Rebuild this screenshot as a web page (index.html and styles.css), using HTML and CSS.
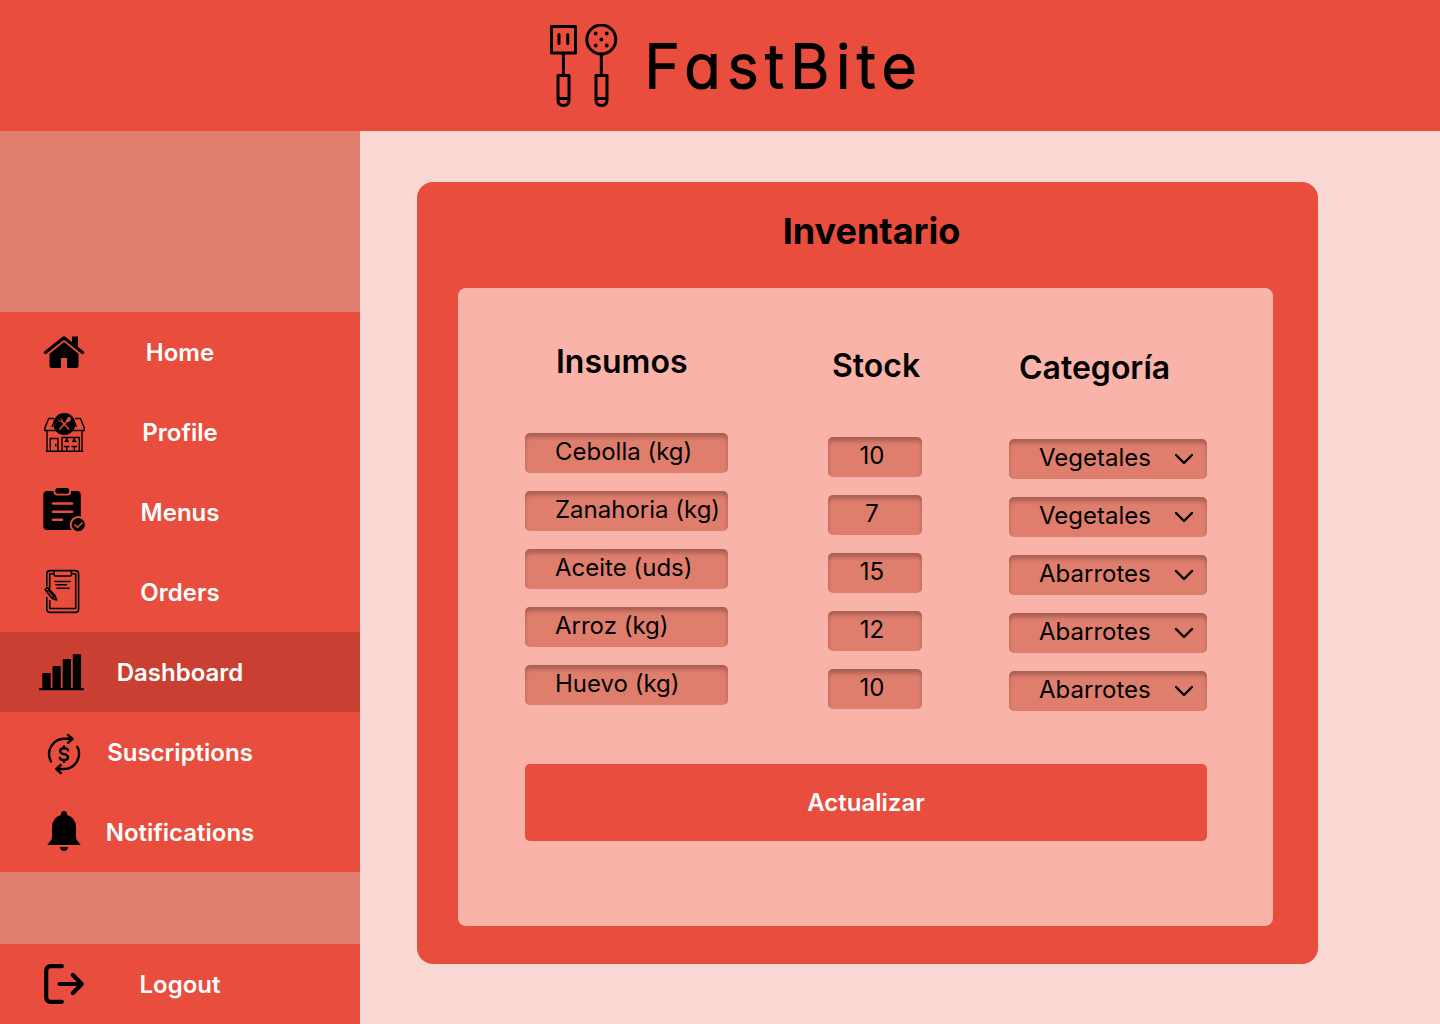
FILE: index.html
```html
<!DOCTYPE html>
<html lang="es">
<head>
<meta charset="utf-8">
<meta name="viewport" content="width=device-width, initial-scale=1">
<title>FastBite - Inventario</title>
<link rel="stylesheet" href="styles.css">
</head>
<body>
<header class="topbar">
  <svg class="topbar-logo" viewBox="0 0 72 84" aria-hidden="true" fill="none" stroke="currentColor" stroke-width="3" stroke-linejoin="round" stroke-linecap="round">
    <path d="M3.5 2.5h24v26.500h-24zM11 10.500v9M19.700 10.500v9M15.400 29v22"/>
    <path d="M10 51.500h11V76q0 5.500-5.500 5.500T10 76zM10 74.500h11"/>
    <circle cx="53.300" cy="15.500" r="14.500"/>
    <path d="M53.300 30v21M48 51.500h11V76q0 5.500-5.500 5.500T48 76zM48 74.500h11"/>
    <g fill="currentColor" stroke="none"><circle cx="47.700" cy="9.500" r="1.900"/><circle cx="58.700" cy="9.500" r="1.900"/><circle cx="53.300" cy="15.500" r="1.900"/><circle cx="47.700" cy="21.500" r="1.900"/><circle cx="58.700" cy="21.500" r="1.900"/></g>
  </svg>
  <span class="topbar-name">FastBite</span>
</header>
<div class="layout">
  <aside class="sidebar">
    <nav class="menu">
      <a class="menu-item" href="#home">
        <svg class="icon" viewBox="0 0 48 48" aria-hidden="true"><path d="M5.500 24.500 24 9.800l18.500 14.700" fill="none" stroke="currentColor" stroke-width="3.200" stroke-linecap="round" stroke-linejoin="round"/><path d="M32 8.500h6V20l-6-5zM24 14l14.500 11.800V38q0 2-2 2H27V30h-6v10h-9.500q-2 0-2-2V25.800z" fill="currentColor"/></svg>
        <span>Home</span>
      </a>
      <a class="menu-item" href="#profile">
        <svg class="icon" viewBox="0 0 48 48" aria-hidden="true" fill="none" stroke="currentColor" stroke-width="1.400"><path d="M14 10.500H8.700L4.800 20v2.500h39.500V20l-3.900-9.500H35M7 22.500v20.800h35v-20.800M5.800 43.300h37.500M10.300 43V30.500h7.700V43M22 43V29.500h17.300V43M12 19l2.500-6M36.500 19 34 13"/><path d="M26.700 29.500V32M34.300 29.500V32M23.800 38.500h5.700M31.500 38.500h5.700M26.700 38.500V43M34.300 38.500V43M15.800 36v2.500"/><path d="M24.500 33.800 26 31.500h1.400l1.500 2.300zM32.100 33.800l1.500-2.300H35l1.500 2.300z" fill="currentColor" stroke-width=".6"/><circle cx="24.300" cy="16" r="11" fill="currentColor" stroke="none"/><g class="icon-cut"><path d="m21 12.500 8 9M27.500 12.500l-8 9" stroke-width="1.500"/><path d="m18.300 11.500 2.200 2.500M20.500 10l2 2.500" stroke-width="1"/></g><ellipse class="icon-cut-fill" cx="28.500" cy="11.700" rx="1.900" ry="2.800" transform="rotate(40 28.500 11.700)" stroke="none"/></svg>
        <span>Profile</span>
      </a>
      <a class="menu-item" href="#menus">
        <svg class="icon" viewBox="0 0 48 48" aria-hidden="true"><rect x="3.300" y="3" width="37.500" height="39" rx="4" fill="currentColor"/><rect x="14.500" y="-1" width="15.500" height="7.500" rx="3" class="icon-cut" fill="currentColor" stroke-width="2"/><rect x="15.500" y=".8" width="13.500" height="4.700" rx="2" fill="currentColor"/><g class="icon-cut" fill="none" stroke-width="2.600" stroke-linecap="round"><path d="M13 15.500h19M13 23.700h19M13 31.700h9"/></g><circle cx="38.300" cy="36.700" r="7.600" class="icon-cut" fill="currentColor" stroke-width="2"/><path d="m34.500 36.500 3 3 5-5" class="icon-cut" fill="none" stroke-width="1.500"/></svg>
        <span>Menus</span>
      </a>
      <a class="menu-item" href="#orders">
        <svg class="icon" viewBox="0 0 48 48" aria-hidden="true" fill="none" stroke="currentColor" stroke-width="1.600" stroke-linecap="round" stroke-linejoin="round"><path d="M6.800 18V6q0-3.400 3.400-3.400h25q3.400 0 3.400 3.400v35q0 3.400-3.400 3.400h-25q-3.400 0-3.400-3.400V29.500"/><path d="M9.700 20V5.700h4.500M31.500 5.700h4.200v34.800h-26v-8"/><path d="M14 3v3.500q0 1.500 1.500 1.500H30q1.500 0 1.500-1.500V3M15 13.500h15M16 16.800h10.500M17 20.300h12"/><path d="m5 21.500 2.500-2 7.500 8 1.500 4.500-4.500-1.800zM7 23.500l2.500-2M12 30l3-2.500M8.500 22l5 6"/></svg>
        <span>Orders</span>
      </a>
      <a class="menu-item menu-item-active" href="#dashboard" aria-current="page">
        <svg class="icon" viewBox="0 0 48 48" aria-hidden="true" fill="currentColor"><rect x="2.300" y="25" width="8.400" height="16" rx="1"/><rect x="12.500" y="18" width="8.300" height="23" rx="1"/><rect x="22.700" y="11" width="8.300" height="30" rx="1"/><rect x="32.800" y="6.200" width="8.300" height="35" rx="1"/><rect x="-1" y="40" width="45" height="2.300" rx="1"/></svg>
        <span>Dashboard</span>
      </a>
      <a class="menu-item" href="#suscriptions">
        <svg class="icon" viewBox="0 0 48 48" aria-hidden="true" fill="none" stroke="currentColor" stroke-width="2.400" stroke-linecap="round" stroke-linejoin="round"><path d="M11 33.500A15.300 15.300 0 0 1 24 10.800h8M28 7l4.500 3.800L28 14.800M37.300 18.700A15.300 15.300 0 0 1 24 41h-7.500M20.800 37l-4.500 4 4.500 4"/><path d="M28 22.300q-.5-2-4-2-3.800 0-3.800 2.800 0 2.400 3.800 3t4 3.100q0 2.900-4 2.900-3.700 0-4.200-2.300M24 18.500v1.800M24 32v1.800"/></svg>
        <span>Suscriptions</span>
      </a>
      <a class="menu-item" href="#notifications">
        <svg class="icon" viewBox="0 0 48 48" aria-hidden="true" fill="currentColor"><path d="M21 7V6a3 3 0 0 1 6 0v1q9 2.800 9 12v10q0 3 2.500 5l2.200 3H7.300l2.200-3q2.500-2 2.500-5V19q0-9.200 9-12zM20 39h8q-.5 4-4 4t-4-4z"/></svg>
        <span>Notifications</span>
      </a>
    </nav>
    <a class="menu-item menu-item-logout" href="#logout">
      <svg class="icon" viewBox="0 0 48 48" aria-hidden="true" fill="none" stroke="currentColor" stroke-width="4.200" stroke-linecap="round" stroke-linejoin="round"><path d="M21.800 6.200H11Q6.200 6.200 6.200 11v26q0 4.800 4.800 4.800h10.800M19.500 24h22M32.800 15l9 9-9 9"/></svg>
      <span>Logout</span>
    </a>
  </aside>
  <main class="content">
    <section class="card">
      <h1 class="card-title">Inventario</h1>
      <form class="panel">
        <table class="stock-table">
          <thead>
            <tr><th class="col-item" scope="col">Insumos</th><th class="col-stock" scope="col">Stock</th><th class="col-category" scope="col">Categoría</th></tr>
          </thead>
          <tbody>
            <tr>
              <td class="col-item"><input class="field" type="text" aria-label="Insumo 1" value="Cebolla (kg)"></td>
              <td class="col-stock"><input class="field field-number" type="text" inputmode="numeric" aria-label="Stock 1" value="10"></td>
              <td class="col-category"><div class="picker"><select class="field" aria-label="Categoría 1"><option selected>Vegetales</option><option>Abarrotes</option></select><svg class="chevron" viewBox="0 0 20 12" aria-hidden="true"><path d="m2 2 8 8 8-8"/></svg></div></td>
            </tr>
            <tr>
              <td class="col-item"><input class="field" type="text" aria-label="Insumo 2" value="Zanahoria (kg)"></td>
              <td class="col-stock"><input class="field field-number" type="text" inputmode="numeric" aria-label="Stock 2" value="7"></td>
              <td class="col-category"><div class="picker"><select class="field" aria-label="Categoría 2"><option selected>Vegetales</option><option>Abarrotes</option></select><svg class="chevron" viewBox="0 0 20 12" aria-hidden="true"><path d="m2 2 8 8 8-8"/></svg></div></td>
            </tr>
            <tr>
              <td class="col-item"><input class="field" type="text" aria-label="Insumo 3" value="Aceite (uds)"></td>
              <td class="col-stock"><input class="field field-number" type="text" inputmode="numeric" aria-label="Stock 3" value="15"></td>
              <td class="col-category"><div class="picker"><select class="field" aria-label="Categoría 3"><option>Vegetales</option><option selected>Abarrotes</option></select><svg class="chevron" viewBox="0 0 20 12" aria-hidden="true"><path d="m2 2 8 8 8-8"/></svg></div></td>
            </tr>
            <tr>
              <td class="col-item"><input class="field" type="text" aria-label="Insumo 4" value="Arroz (kg)"></td>
              <td class="col-stock"><input class="field field-number" type="text" inputmode="numeric" aria-label="Stock 4" value="12"></td>
              <td class="col-category"><div class="picker"><select class="field" aria-label="Categoría 4"><option>Vegetales</option><option selected>Abarrotes</option></select><svg class="chevron" viewBox="0 0 20 12" aria-hidden="true"><path d="m2 2 8 8 8-8"/></svg></div></td>
            </tr>
            <tr>
              <td class="col-item"><input class="field" type="text" aria-label="Insumo 5" value="Huevo (kg)"></td>
              <td class="col-stock"><input class="field field-number" type="text" inputmode="numeric" aria-label="Stock 5" value="10"></td>
              <td class="col-category"><div class="picker"><select class="field" aria-label="Categoría 5"><option>Vegetales</option><option selected>Abarrotes</option></select><svg class="chevron" viewBox="0 0 20 12" aria-hidden="true"><path d="m2 2 8 8 8-8"/></svg></div></td>
            </tr>
          </tbody>
        </table>
        <button class="submit" type="submit">Actualizar</button>
      </form>
    </section>
  </main>
</div>
</body>
</html>
```
FILE: styles.css
```css
:root {
  --red: #e84d3d;
  --red-dark: #c94032;
  --clay: #df7e6d;
  --blush: #f9d8d3;
  --salmon: #fab3a9;
}

* {
  box-sizing: border-box;
}

body {
  margin: 0;
  min-height: 100vh;
  display: flex;
  flex-direction: column;
  font-family: Inter, "Liberation Sans", sans-serif;
  font-size: 24px;
  color: #000;
  background: var(--blush);
}

.topbar {
  display: flex;
  justify-content: center;
  align-items: center;
  gap: 24px;
  height: 131px;
  padding-left: 32px;
  background: var(--red);
}

.topbar-logo {
  width: 72px;
  height: 84px;
}

.topbar-name {
  font-size: 60px;
  font-weight: 300;
  line-height: 72px;
  letter-spacing: 7px;
  font-feature-settings: "cv11";
  -webkit-text-stroke: 2px #000;
  stroke-linejoin: round;
}

.layout {
  flex: 1;
  display: flex;
}

.sidebar {
  flex: none;
  width: 360px;
  display: flex;
  flex-direction: column;
  padding-top: 181px;
  background: var(--clay);
}

.menu-item {
  display: grid;
  grid-template-columns: 64px 1fr 64px;
  align-items: center;
  justify-items: center;
  height: 80px;
  padding: 0 32px;
  color: #fff;
  font-weight: 600;
  text-decoration: none;
  white-space: nowrap;
  background: var(--red);
}

.menu-item-active {
  background: var(--red-dark);
}

.menu-item-logout {
  margin-top: auto;
}

.icon {
  width: 48px;
  height: 48px;
  color: #000;
  overflow: visible;
}

.icon-cut {
  stroke: var(--red);
}

.icon-cut-fill {
  fill: var(--red);
}

.content {
  flex: 1;
  min-width: 0;
  padding: 51px 122px 60px 57px;
}

.card {
  padding: 25px 45px 38px 41px;
  border-radius: 16px;
  background: var(--red);
}

.card-title {
  margin: 0 0 33px;
  padding-left: 12px;
  font-size: 36px;
  font-weight: 700;
  line-height: 48px;
  text-align: center;
}

.panel {
  padding: 48px 66px 85px 67px;
  border-radius: 8px;
  background: var(--salmon);
}

.stock-table {
  width: 100%;
  border-collapse: collapse;
  table-layout: fixed;
}

.stock-table th {
  height: 97px;
  font-size: 32px;
  font-weight: 600;
  line-height: 52px;
  text-align: left;
  vertical-align: top;
}

.stock-table td {
  height: 58px;
  vertical-align: top;
}

.col-item {
  padding: 0 100px 0 0;
}

.col-stock {
  width: 181px;
  padding: 4px 87px 0 0;
}

.col-category {
  width: 198px;
  padding: 6px 0 0;
}

th.col-item {
  padding-left: 31px;
}

th.col-stock {
  padding-left: 4px;
}

th.col-category {
  padding-left: 10px;
}

.field {
  display: block;
  width: 100%;
  height: 40px;
  margin: 0;
  padding: 0 0 4px 30px;
  border: 0;
  border-radius: 5px;
  appearance: none;
  font: inherit;
  color: inherit;
  background: var(--clay);
  box-shadow: inset 0 4px 4px rgba(0, 0, 0, 0.25);
}

.field-number {
  padding: 0 6px 4px 0;
  text-align: center;
}

.picker {
  display: grid;
  align-items: center;
}

.picker > * {
  grid-area: 1 / 1;
}

.chevron {
  width: 20px;
  height: 12px;
  margin-right: 13px;
  justify-self: end;
  fill: none;
  stroke: #000;
  stroke-width: 2.4;
  stroke-linecap: round;
  stroke-linejoin: round;
  pointer-events: none;
}

.submit {
  display: block;
  width: 100%;
  height: 77px;
  margin-top: 41px;
  border: 0;
  border-radius: 5px;
  font: inherit;
  font-weight: 600;
  color: #fff;
  background: var(--red);
}
```
